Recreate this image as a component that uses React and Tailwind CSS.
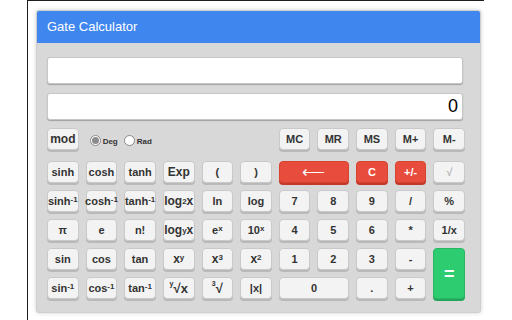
import React from "react";

const Sup = ({ children }) => <sup className="text-[8px] relative -top-[1px]">{children}</sup>;
const Sub = ({ children }) => <sub className="text-[8px] relative top-[1px]">{children}</sub>;

const Btn = ({ children, className = "", tone = "plain" }) => {
  const tones = {
    plain: "bg-[#f3f3f3] border-[#c9c9c9] text-[#333] shadow-[0_2px_0_#b9b9b9]",
    red: "bg-[#e74c3c] border-[#d8432f] text-white shadow-[0_2px_0_#c0392b]",
    green: "bg-[#2ecc71] border-[#27b863] text-white shadow-[0_2px_0_#25a55c]",
    dim: "bg-[#f3f3f3] border-[#c9c9c9] text-[#9a9a9a] shadow-[0_2px_0_#b9b9b9]",
  };
  return (
    <div
      className={`flex items-center justify-center rounded-[4px] border text-[11px] font-bold leading-none ${tones[tone]} ${className}`}
    >
      {children}
    </div>
  );
};

const Root = ({ idx, base }) => (
  <span className="flex items-start">
    <span className="text-[7px] leading-none -mt-[2px]">{idx}</span>
    <span className="text-[13px] leading-none">√</span>
    {base && <span className="text-[13px] leading-none">{base}</span>}
  </span>
);

const Radio = ({ label, checked }) => (
  <div className="flex items-end gap-[2px]">
    <div className="w-[11px] h-[11px] rounded-full border border-[#8a8a8a] bg-white flex items-center justify-center">
      {checked && <div className="w-[7px] h-[7px] rounded-full bg-[#8c8c8c]" />}
    </div>
    <span className="text-[8px] font-bold text-[#333] leading-none">{label}</span>
  </div>
);

export default function App() {
  return (
    <div className="w-[512px] h-[320px] bg-white overflow-hidden flex" style={{ fontFamily: '"Liberation Sans", Arial, sans-serif' }}>
      <div className="w-[27px] shrink-0" />
      <div className="w-[1px] h-[320px] bg-[#1e1e1e] shrink-0" />
      <div className="w-[456px] shrink-0">
        <div className="h-[1px] bg-[#1e1e1e]" />
        <div className="pl-[8px] pt-[9px]">
          <div className="w-[445px] h-[303px] rounded-[3px] bg-[#d8d8d8] border border-[#cfcfcf] shadow-[0_0_4px_rgba(0,0,0,0.18)] overflow-hidden">
            <div className="h-[32px] bg-[#4086ef] flex items-center px-[10px] text-white text-[13px]">
              Gate Calculator
            </div>
            <div className="pl-[10px] pt-[14px]">
              <div className="w-[416px] h-[27px] bg-white rounded-[3px] border border-[#c6c6c6] shadow-[0_1px_1px_rgba(0,0,0,0.25)]" />
              <div className="mt-[9px] w-[416px] h-[27px] bg-white rounded-[3px] border border-[#c6c6c6] shadow-[0_1px_1px_rgba(0,0,0,0.25)] flex items-center justify-end pr-[4px] text-[18px] text-black">
                0
              </div>
              <div className="mt-[8px] w-[418px] grid grid-cols-11 gap-x-[7px] h-[22px]">
                <Btn className="text-[12px]">mod</Btn>
                <div className="col-span-5 flex items-center gap-[6px] pl-[4px] pt-[2px]">
                  <Radio label="Deg" checked />
                  <Radio label="Rad" />
                </div>
                <Btn>MC</Btn>
                <Btn>MR</Btn>
                <Btn>MS</Btn>
                <Btn>M+</Btn>
                <Btn>M-</Btn>
              </div>
              <div className="mt-[11px] w-[418px] grid grid-cols-11 auto-rows-[22px] gap-x-[7px] gap-y-[7px]">
                <Btn>sinh</Btn>
                <Btn>cosh</Btn>
                <Btn>tanh</Btn>
                <Btn className="text-[12px]">Exp</Btn>
                <Btn>(</Btn>
                <Btn>)</Btn>
                <Btn tone="red" className="col-span-2 text-[16px] font-normal">⟵</Btn>
                <Btn tone="red">C</Btn>
                <Btn tone="red">+/-</Btn>
                <Btn tone="dim" className="font-normal">√</Btn>

                <Btn>sinh<Sup>-1</Sup></Btn>
                <Btn>cosh<Sup>-1</Sup></Btn>
                <Btn>tanh<Sup>-1</Sup></Btn>
                <Btn className="text-[12px]">log<Sub>2</Sub>x</Btn>
                <Btn>ln</Btn>
                <Btn>log</Btn>
                <Btn>7</Btn>
                <Btn>8</Btn>
                <Btn>9</Btn>
                <Btn>/</Btn>
                <Btn>%</Btn>

                <Btn>π</Btn>
                <Btn>e</Btn>
                <Btn>n!</Btn>
                <Btn className="text-[12px]">log<Sub>y</Sub>x</Btn>
                <Btn>e<Sup>x</Sup></Btn>
                <Btn>10<Sup>x</Sup></Btn>
                <Btn>4</Btn>
                <Btn>5</Btn>
                <Btn>6</Btn>
                <Btn>*</Btn>
                <Btn>1/x</Btn>

                <Btn>sin</Btn>
                <Btn>cos</Btn>
                <Btn>tan</Btn>
                <Btn className="text-[12px]">x<Sup>y</Sup></Btn>
                <Btn className="text-[12px]">x<Sup>3</Sup></Btn>
                <Btn className="text-[12px]">x<Sup>2</Sup></Btn>
                <Btn>1</Btn>
                <Btn>2</Btn>
                <Btn>3</Btn>
                <Btn>-</Btn>
                <Btn tone="green" className="row-span-2 text-[18px]">=</Btn>

                <Btn>sin<Sup>-1</Sup></Btn>
                <Btn>cos<Sup>-1</Sup></Btn>
                <Btn>tan<Sup>-1</Sup></Btn>
                <Btn><Root idx="y" base="x" /></Btn>
                <Btn><Root idx="3" /></Btn>
                <Btn>|x|</Btn>
                <Btn className="col-span-2">0</Btn>
                <Btn>.</Btn>
                <Btn>+</Btn>
              </div>
            </div>
          </div>
        </div>
      </div>
    </div>
  );
}
